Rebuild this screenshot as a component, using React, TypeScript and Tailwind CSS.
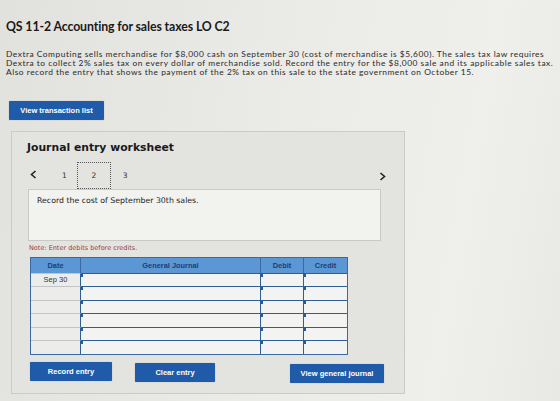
const rows = ['Sep 30', '', '', '', '', ''];

function BlueButton({ label, className = '' }: { label: string; className?: string }) {
  return (
    <button
      className={`flex items-center justify-center rounded-[1px] bg-[#1f5ba8] font-['Liberation_Sans',sans-serif] text-[7.5px] font-bold text-white shadow-[0_0_1px_rgba(0,0,0,0.4)] ${className}`}
    >
      {label}
    </button>
  );
}

function Chevron({ dir }: { dir: 'left' | 'right' }) {
  return (
    <svg width="7" height="9" viewBox="0 0 7 9" fill="none" stroke="#222" strokeWidth="1.6">
      {dir === 'left' ? <polyline points="5.5,1 1.5,4.5 5.5,8" /> : <polyline points="1.5,1 5.5,4.5 1.5,8" />}
    </svg>
  );
}

function Marker() {
  return <span className="absolute left-0 top-0 h-[3px] w-[2px] bg-[#1f5ba8]" />;
}

function JournalTable() {
  return (
    <div className="ml-[18px] mt-[3px] w-[318px] border border-[#3a6aa3] font-['Liberation_Sans',sans-serif]">
      <div className="grid h-[15px] grid-cols-[50px_180px_43px_1fr] bg-[#5b97d4] text-[7.4px] font-bold text-[#1b3f73]">
        <div className="flex items-center justify-center border-r border-[#3a6aa3]">Date</div>
        <div className="flex items-center justify-center border-r border-[#3a6aa3]">General Journal</div>
        <div className="flex items-center justify-center border-r border-[#3a6aa3]">Debit</div>
        <div className="flex items-center justify-center">Credit</div>
      </div>
      {rows.map((d, i) => (
        <div
          key={i}
          className="grid h-[13.5px] grid-cols-[50px_180px_43px_1fr] border-t border-[#2f5e96] bg-[#f3f3f1] text-[7.5px] text-[#333]"
        >
          <div className="-mt-px flex items-center justify-center border-r border-t border-r-[#2f5e96] border-t-[#c4c4c2] bg-[#ececea]">
            {d}
          </div>
          <div className="relative border-r border-[#2f5e96]">
            <Marker />
          </div>
          <div className="relative border-r border-[#2f5e96]">
            <Marker />
          </div>
          <div className="relative">
            <Marker />
          </div>
        </div>
      ))}
    </div>
  );
}

export default function App() {
  return (
    <div className="h-[401px] w-[560px] overflow-hidden bg-[linear-gradient(100deg,#e1e1de_0%,#eaeae7_45%,#efefec_80%,#e8e8e5_100%)] text-[#1e1e1e]">
      <div className="px-[6px] pt-[19px]">
        <h1 className="font-['Lato',sans-serif] text-[12.3px] font-bold leading-[16px] tracking-[-0.1px] text-[#1a1a1a]">
          QS 11-2 Accounting for sales taxes LO C2
        </h1>
        <p className="mt-[15px] whitespace-nowrap font-['Lato',sans-serif] text-[8.4px] leading-[9px] tracking-[0.52px] text-[#2a2a2a]">
          Dextra Computing sells merchandise for $8,000 cash on September 30 (cost of merchandise is $5,600). The sales tax law requires
          <br />
          Dextra to collect 2% sales tax on every dollar of merchandise sold. Record the entry for the $8,000 sale and its applicable sales tax.
          <br />
          Also record the entry that shows the payment of the 2% tax on this sale to the state government on October 15.
        </p>
        <BlueButton label="View transaction list" className="ml-[3px] mt-[24px] h-[19px] w-[95px]" />
      </div>

      <section className="ml-[11px] mt-[11px] h-[263px] w-[394px] border border-[#cbcbc8] bg-[#e3e3e0] pt-[8px]">
        <h2 className="ml-[15px] font-['DejaVu_Sans',sans-serif] text-[10.8px] font-bold leading-[16px] text-[#1a1a1a]">
          Journal entry worksheet
        </h2>

        <div className="mt-[6px] flex h-[27px] items-center font-['DejaVu_Sans',sans-serif] text-[7.5px] text-[#333]">
          <span className="ml-[18px] mt-[-3px]">
            <Chevron dir="left" />
          </span>
          <span className="ml-[25px]">1</span>
          <span className="ml-[10px] flex h-[27px] w-[34px] items-center justify-center border border-dotted border-[#555]">
            2
          </span>
          <span className="ml-[12px]">3</span>
          <span className="ml-auto mr-[18px] mt-[1px]">
            <Chevron dir="right" />
          </span>
        </div>

        <div className="ml-[16px] h-[52px] w-[353px] border border-[#c9c9c6] bg-[#f2f2ef] px-[8px] pt-[5px] font-['DejaVu_Sans',sans-serif] text-[7.8px] text-[#222]">
          Record the cost of September 30th sales.
        </div>

        <p className="ml-[17px] mt-[3px] font-['DejaVu_Sans',sans-serif] text-[6.5px] text-[#9b3a3a]">
          Note: Enter debits before credits.
        </p>

        <JournalTable />

        <div className="mt-[7px] flex items-start">
          <BlueButton label="Record entry" className="ml-[18px] h-[19px] w-[82px]" />
          <BlueButton label="Clear entry" className="ml-[23px] mt-[1px] h-[19px] w-[80px]" />
          <BlueButton label="View general journal" className="ml-[75px] mt-[2px] h-[19px] w-[94px]" />
        </div>
      </section>
    </div>
  );
}
